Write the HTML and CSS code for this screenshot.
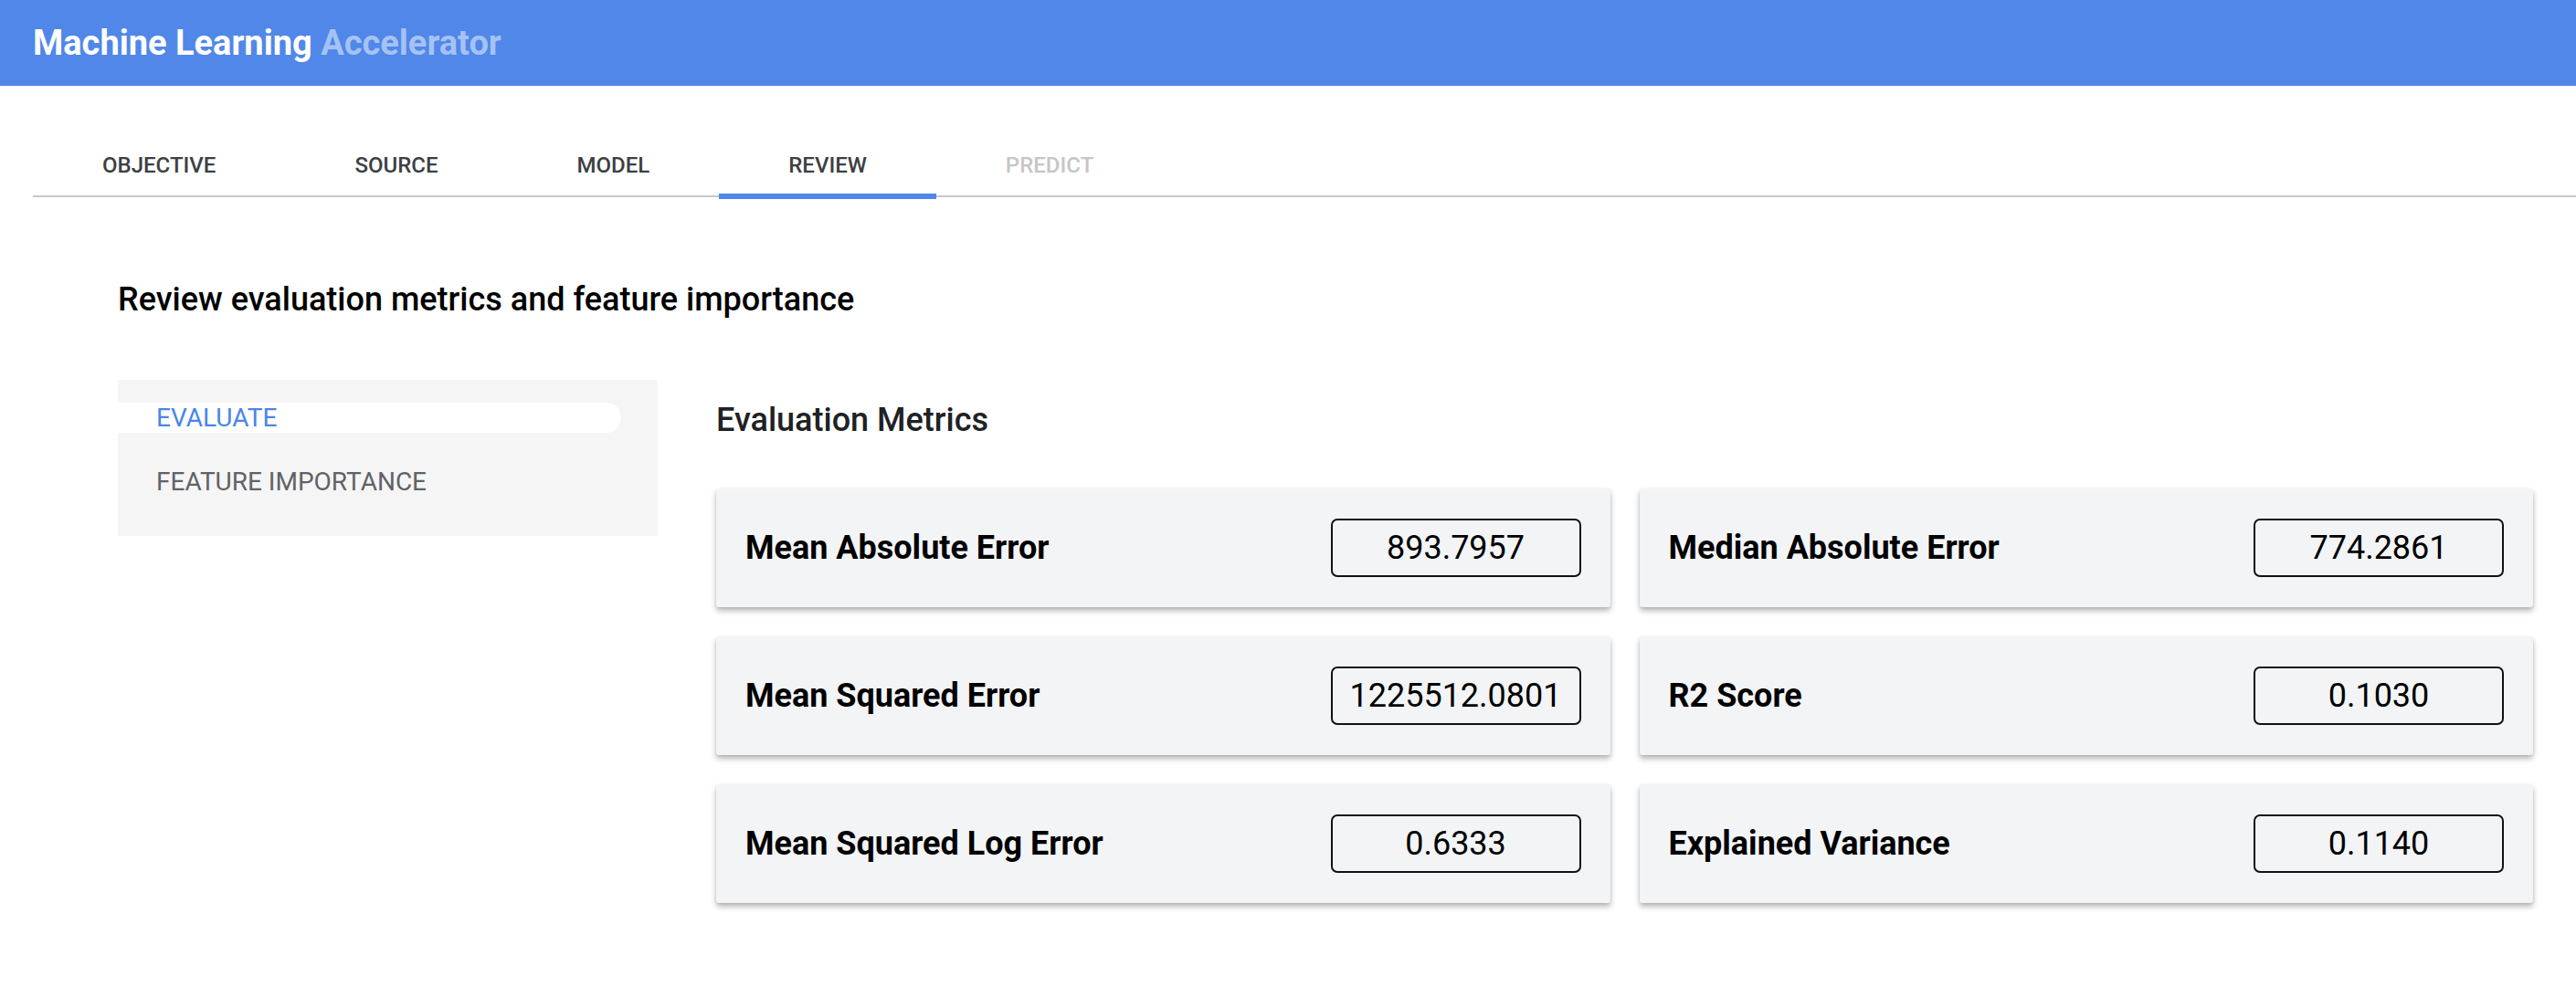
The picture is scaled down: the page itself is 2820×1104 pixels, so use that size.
FILE: index.html
```html
<!DOCTYPE html>
<html>
<head>
<meta charset="utf-8">
<link rel="stylesheet" href="styles.css">
</head>
<body>
<header class="topbar">
  <span class="brand">Machine Learning <span class="brand-light">Accelerator</span></span>
</header>
<main class="page">
  <nav class="tabs">
    <div class="tab">OBJECTIVE</div>
    <div class="tab">SOURCE</div>
    <div class="tab">MODEL</div>
    <div class="tab active">REVIEW</div>
    <div class="tab disabled">PREDICT</div>
  </nav>
  <section class="content">
    <h1 class="title">Review evaluation metrics and feature importance</h1>
    <div class="layout">
      <aside class="sidenav">
        <div class="nav-item selected">EVALUATE</div>
        <div class="nav-item">FEATURE IMPORTANCE</div>
      </aside>
      <div class="metrics">
        <h2 class="metrics-title">Evaluation Metrics</h2>
        <div class="grid">
          <div class="card"><span class="label">Mean Absolute Error</span><span class="value">893.7957</span></div>
          <div class="card"><span class="label">Median Absolute Error</span><span class="value">774.2861</span></div>
          <div class="card"><span class="label">Mean Squared Error</span><span class="value">1225512.0801</span></div>
          <div class="card"><span class="label">R2 Score</span><span class="value">0.1030</span></div>
          <div class="card"><span class="label">Mean Squared Log Error</span><span class="value">0.6333</span></div>
          <div class="card"><span class="label">Explained Variance</span><span class="value">0.1140</span></div>
        </div>
      </div>
    </div>
  </section>
</main>
</body>
</html>
```
FILE: styles.css
```css
* { box-sizing: border-box; }
body {
  margin: 0;
  font-family: Roboto, "Liberation Sans", sans-serif;
  background: #ffffff;
  color: #000;
}
.topbar {
  height: 94px;
  background: #5087e8;
  display: flex;
  align-items: center;
  padding-left: 36px;
}
.brand {
  font-family: Roboto, "Liberation Sans", sans-serif;
  font-weight: 700;
  font-size: 38px;
  color: #ffffff;
}
.brand-light { color: #a5c2f4; }
.page { padding: 0 0 60px 36px; }
.tabs {
  display: flex;
  margin-top: 50px;
  border-bottom: 2px solid #c4c7cb;
  height: 72px;
}
.tab {
  padding: 0 76px;
  height: 72px;
  display: flex;
  align-items: center;
  padding-top: 2px;
  font-size: 24px;
  font-weight: 500;
  color: #3c4043;
  position: relative;
}
.tab.active::after {
  content: "";
  position: absolute;
  left: 0; right: 0; bottom: -2px;
  height: 6px;
  background: #5087e8;
}
.tab.disabled { color: #c6c6c6; }
.content { padding-left: 93px; padding-right: 47px; }
.title {
  margin: 0;
  padding-top: 92px;
  font-size: 36px;
  font-weight: 500;
  line-height: 40px;
  color: #000;
}
.layout {
  display: flex;
  gap: 64px;
  margin-top: 68px;
  align-items: flex-start;
}
.sidenav {
  width: 591px;
  height: 171px;
  background: #f5f5f5;
  padding-top: 25px;
  flex: none;
}
.nav-item {
  height: 33px;
  display: flex;
  align-items: center;
  padding-left: 42px;
  font-size: 28px;
  color: #5f6368;
  margin-right: 40px;
  border-radius: 0 17px 17px 0;
}
.nav-item.selected {
  background: #ffffff;
  color: #4a86e8;
  margin-bottom: 37px;
}
.metrics { flex: 1; }
.metrics-title {
  margin: 0;
  font-size: 36px;
  font-weight: 500;
  color: #202124;
  line-height: 40px;
  margin-top: 24px;
}
.grid {
  display: grid;
  grid-template-columns: 1fr 1fr;
  gap: 32px;
  margin-top: 55px;
}
.card {
  height: 130px;
  background: #f3f4f6;
  border-radius: 3px;
  box-shadow: 0 4px 6px rgba(0,0,0,0.28), 0 1px 3px rgba(0,0,0,0.08);
  display: flex;
  align-items: center;
  justify-content: space-between;
  padding: 0 32px;
}
.label {
  font-size: 36px;
  font-weight: 700;
  color: #000;
}
.value {
  width: 274px;
  height: 64px;
  border: 2px solid #111;
  border-radius: 7px;
  display: flex;
  align-items: center;
  justify-content: center;
  font-size: 36px;
  color: #000;
}
```
